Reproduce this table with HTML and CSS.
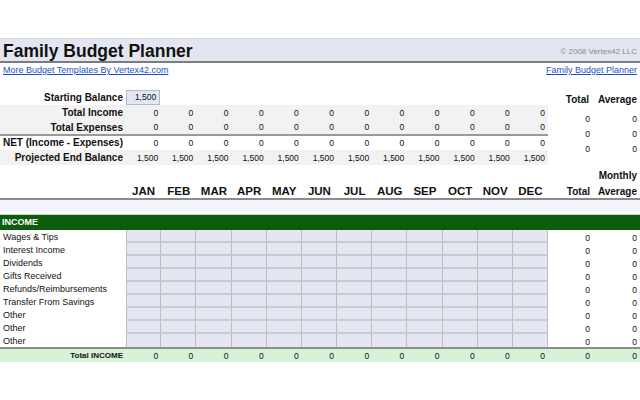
FILE: index.html
```html
<!DOCTYPE html>
<html>
<head>
<meta charset="utf-8">
<link rel="stylesheet" href="styles.css">
</head>
<body>
<div class="sheet">
  <div class="titlebar">
    <span class="title">Family Budget Planner</span>
    <span class="copy">© 2008 Vertex42 LLC</span>
  </div>
  <div class="links">
    <a href="#">More Budget Templates By Vertex42.com</a>
    <a href="#">Family Budget Planner</a>
  </div>

  <div class="summary">
    <div class="row r15">
      <div class="main">
        <div class="lbl b">Starting Balance</div>
        <div class="input">1,500</div>
      </div>
      <div class="side hd"><span>Total</span><span>Average</span></div>
    </div>
    <div class="row r15">
      <div class="main grey">
        <div class="lbl b">Total Income</div>
        <span>0</span><span>0</span><span>0</span><span>0</span><span>0</span><span>0</span><span>0</span><span>0</span><span>0</span><span>0</span><span>0</span><span>0</span>
      </div>
      <div class="side low"><span>0</span><span>0</span></div>
    </div>
    <div class="row r15">
      <div class="main grey line2">
        <div class="lbl b">Total Expenses</div>
        <span>0</span><span>0</span><span>0</span><span>0</span><span>0</span><span>0</span><span>0</span><span>0</span><span>0</span><span>0</span><span>0</span><span>0</span>
      </div>
      <div class="side low"><span>0</span><span>0</span></div>
    </div>
    <div class="row r15">
      <div class="main line1">
        <div class="lbl b">NET (Income - Expenses)</div>
        <span>0</span><span>0</span><span>0</span><span>0</span><span>0</span><span>0</span><span>0</span><span>0</span><span>0</span><span>0</span><span>0</span><span>0</span>
      </div>
      <div class="side low"><span>0</span><span>0</span></div>
    </div>
    <div class="row r15">
      <div class="main grey">
        <div class="lbl b">Projected End Balance</div>
        <span>1,500</span><span>1,500</span><span>1,500</span><span>1,500</span><span>1,500</span><span>1,500</span><span>1,500</span><span>1,500</span><span>1,500</span><span>1,500</span><span>1,500</span><span>1,500</span>
      </div>
      <div class="side"></div>
    </div>
  </div>

  <div class="months">
    <div class="row">
      <div class="main mh">
        <div></div>
        <span>JAN</span><span>FEB</span><span>MAR</span><span>APR</span><span>MAY</span><span>JUN</span><span>JUL</span><span>AUG</span><span>SEP</span><span>OCT</span><span>NOV</span><span>DEC</span>
      </div>
      <div class="side hd2"><span>Total</span><span><em>Monthly</em>Average</span></div>
    </div>
  </div>
  <div class="band"></div>
  <div class="section">INCOME</div>

  <div class="income">
    <div class="row ir"><div class="main in"><div class="lbl2">Wages &amp; Tips</div><i></i><i></i><i></i><i></i><i></i><i></i><i></i><i></i><i></i><i></i><i></i><i></i></div><div class="side"><span>0</span><span>0</span></div></div>
    <div class="row ir"><div class="main in"><div class="lbl2">Interest Income</div><i></i><i></i><i></i><i></i><i></i><i></i><i></i><i></i><i></i><i></i><i></i><i></i></div><div class="side"><span>0</span><span>0</span></div></div>
    <div class="row ir"><div class="main in"><div class="lbl2">Dividends</div><i></i><i></i><i></i><i></i><i></i><i></i><i></i><i></i><i></i><i></i><i></i><i></i></div><div class="side"><span>0</span><span>0</span></div></div>
    <div class="row ir"><div class="main in"><div class="lbl2">Gifts Received</div><i></i><i></i><i></i><i></i><i></i><i></i><i></i><i></i><i></i><i></i><i></i><i></i></div><div class="side"><span>0</span><span>0</span></div></div>
    <div class="row ir"><div class="main in"><div class="lbl2">Refunds/Reimbursements</div><i></i><i></i><i></i><i></i><i></i><i></i><i></i><i></i><i></i><i></i><i></i><i></i></div><div class="side"><span>0</span><span>0</span></div></div>
    <div class="row ir"><div class="main in"><div class="lbl2">Transfer From Savings</div><i></i><i></i><i></i><i></i><i></i><i></i><i></i><i></i><i></i><i></i><i></i><i></i></div><div class="side"><span>0</span><span>0</span></div></div>
    <div class="row ir"><div class="main in"><div class="lbl2">Other</div><i></i><i></i><i></i><i></i><i></i><i></i><i></i><i></i><i></i><i></i><i></i><i></i></div><div class="side"><span>0</span><span>0</span></div></div>
    <div class="row ir"><div class="main in"><div class="lbl2">Other</div><i></i><i></i><i></i><i></i><i></i><i></i><i></i><i></i><i></i><i></i><i></i><i></i></div><div class="side"><span>0</span><span>0</span></div></div>
    <div class="row ir last"><div class="main in"><div class="lbl2">Other</div><i></i><i></i><i></i><i></i><i></i><i></i><i></i><i></i><i></i><i></i><i></i><i></i></div><div class="side"><span>0</span><span>0</span></div></div>
    <div class="row total">
      <div class="main">
        <div class="lbl b9">Total INCOME</div>
        <span>0</span><span>0</span><span>0</span><span>0</span><span>0</span><span>0</span><span>0</span><span>0</span><span>0</span><span>0</span><span>0</span><span>0</span>
      </div>
      <div class="side"><span>0</span><span>0</span></div>
    </div>
  </div>
</div>
</body>
</html>
```

FILE: styles.css
```css
html, body {
  margin: 0;
  padding: 0;
  background: #fff;
}
body {
  font-family: "Liberation Sans", Arial, sans-serif;
  color: #111;
  width: 640px;
}
.sheet {
  padding-top: 38px;
}
.titlebar {
  height: 22px;
  background: #e3e6f0;
  border-top: 1px solid #d3d5de;
  border-bottom: 2px solid #7c7c7c;
  display: flex;
  justify-content: space-between;
  align-items: center;
  padding: 0 3px 0 3px;
}
.title {
  font-size: 17.5px;
  font-weight: bold;
  line-height: 22px;
  color: #111;
  padding-top: 2px;
}
.copy {
  font-size: 8px;
  color: #8a8a8a;
  padding-top: 2px;
}
.links {
  height: 14px;
  display: flex;
  justify-content: space-between;
  align-items: center;
  padding: 0 3px;
  font-size: 9px;
}
.links a {
  color: #1d4fc4;
  text-decoration: underline;
}
.summary {
  margin-top: 13px;
}
.row {
  display: flex;
  width: 640px;
}
.main {
  width: 548px;
  display: grid;
  grid-template-columns: 126px repeat(12, 1fr);
  align-items: center;
  font-size: 8.5px;
}
.main > span {
  text-align: right;
  padding-right: 3px;
}
.side {
  width: 92px;
  display: grid;
  grid-template-columns: 45px 47px;
  align-items: center;
  font-size: 8.5px;
}
.side > span {
  text-align: right;
  padding-right: 3px;
}
.r15 { height: 15px; }
.r15 > .main, .r15 > .side { height: 15px; }
.grey { background: #f2f2f2; }
.line2 { border-bottom: 2px solid #9a9a9a; height: 14px !important; }
.line1 { border-bottom: 1px solid #555; height: 15px !important; }
.lbl {
  text-align: right;
  padding-right: 3px;
  white-space: nowrap;
}
.b {
  font-weight: bold;
  font-size: 10px;
}
.b9 {
  font-weight: bold;
  font-size: 8px;
}
.input {
  height: 13px;
  line-height: 13px;
  background: #e3e7f3;
  border: 1px solid #b4b8c8;
  text-align: right;
  padding-right: 3px;
  margin-right: 1px;
}
.hd > span {
  font-weight: bold;
  font-size: 10px;
  align-self: end;
}
.hd > span:first-child { padding-right: 4px; }
.low > span {
  padding-top: 9px;
}
.months {
  margin-top: 3px;
}
.months .row {
  height: 30px;
}
.mh {
  height: 30px;
  align-items: end;
}
.mh > span {
  text-align: center;
  font-weight: bold;
  font-size: 11.5px;
  padding: 0 0 1px 0;
}
.hd2 {
  height: 30px;
  align-items: end;
}
.hd2 > span {
  font-weight: bold;
  font-size: 10px;
  padding-bottom: 1px;
  line-height: 16px;
}
.hd2 em {
  font-style: normal;
  display: block;
}
.band {
  height: 14px;
  border-top: 2px solid #8b8b8b;
  background: #f4f5fb;
  border-bottom: 1px solid #d6d6d6;
  box-shadow: inset 0 -2px 0 #fff;
}
.section {
  height: 15px;
  line-height: 15px;
  background: #0b5d0b;
  color: #fff;
  font-weight: bold;
  font-size: 9px;
  padding-left: 2px;
}
.ir {
  height: 13px;
}
.in {
  height: 13px;
}
.lbl2 {
  padding-left: 3px;
  font-size: 9px;
  line-height: 14px;
  height: 13px;
  white-space: nowrap;
}
.in > i {
  display: block;
  height: 13px;
  box-sizing: border-box;
  background: #e4e6f2;
  border-right: 1px solid #bdbdc4;
  border-bottom: 2px solid #c9cad2;
}
.in > i:first-of-type {
  border-left: 1px solid #bdbdc4;
}
.ir .side {
  height: 13px;
  line-height: 13px;
}
.ir .side > span {
  padding-top: 2px;
}
.last {
  border-bottom: 2px solid #8d8d8d;
}
.last .in > i {
  border-bottom: none;
}
.total {
  height: 13px;
  background: #d7f2d7;
}
.total .main, .total .side {
  height: 13px;
}
```
